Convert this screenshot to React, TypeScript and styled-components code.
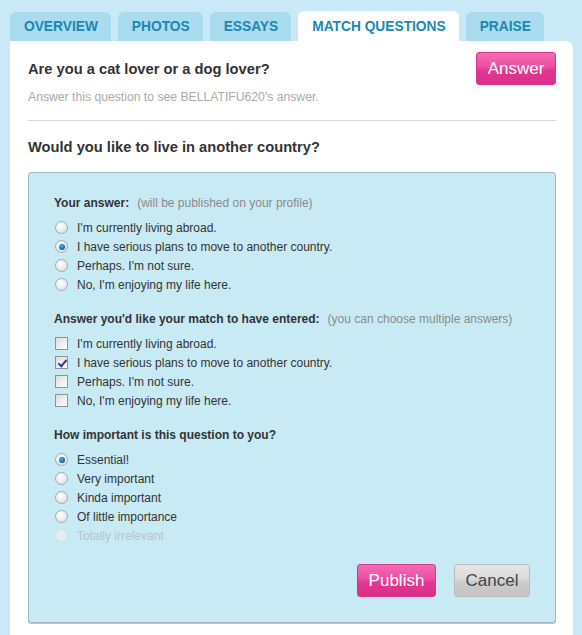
import React from "react";
import styled, { createGlobalStyle, css } from "styled-components";

const Global = createGlobalStyle`
  html, body { margin: 0; padding: 0; }
  body {
    background: #c8e9f5;
    font-family: "Liberation Sans", Arial, sans-serif;
    color: #333;
  }
`;

const Page = styled.div`
  width: 563px;
  padding: 11px 0 0 10px;
`;

const Tabs = styled.div`
  display: flex;
  align-items: flex-end;
  gap: 7px;
`;

const Tab = styled.div<{ $active?: boolean }>`
  height: ${(p) => (p.$active ? 30 : 29)}px;
  padding: 0 13px 0 14px;
  display: flex;
  align-items: center;
  border-radius: 6px 6px 0 0;
  font-size: 13.75px;
  font-weight: bold;
  color: #1c87b4;
  background: ${(p) => (p.$active ? "#ffffff" : "#a9dcee")};
`;

const Panel = styled.div`
  background: #fff;
  border-radius: 0 7px 0 0;
  padding: 11px 17px 24px 18px;
`;

const HeaderRow = styled.div`
  display: flex;
  align-items: center;
  justify-content: space-between;
`;

const Title = styled.h2`
  margin: 0;
  font-size: 14.7px;
  font-weight: bold;
  color: #333;
`;

const Hint = styled.div`
  margin-top: 4px;
  font-size: 12.2px;
  line-height: 16px;
  color: #aaa;
`;

const Divider = styled.hr`
  border: none;
  border-top: 1px solid #d6d6d6;
  margin: 15px 0 16px;
`;

const Question = styled(Title)`
  line-height: 20px;
  margin-bottom: 15px;
`;

const Box = styled.div`
  background: #c8eaf5;
  border: 1px solid #a7b8bf;
  border-radius: 3px;
  box-shadow: 0 1px 0 #b9c6cb;
  padding: 20px 25px 25px 25px;
`;

const Section = styled.div`
  & + & {
    margin-top: 15px;
  }
`;

const SectionHead = styled.div`
  height: 19px;
  display: flex;
  align-items: center;
  margin-bottom: 6px;
  font-size: 12px;
  font-weight: bold;
  color: #333;
`;

const Note = styled.span`
  font-weight: normal;
  color: #8a8a8a;
  margin-left: 8px;
`;

const Option = styled.label<{ $disabled?: boolean }>`
  height: 19px;
  display: flex;
  align-items: center;
  font-size: 12px;
  color: ${(p) => (p.$disabled ? "#b8c4c8" : "#333")};
`;

const Radio = styled.input.attrs({ type: "radio" })`
  appearance: none;
  width: 13px;
  height: 13px;
  margin: 0 9px 0 1px;
  border-radius: 50%;
  border: 1px solid #a3a9ac;
  background: radial-gradient(circle at 40% 35%, #ffffff 0%, #e9ebec 55%, #cfd3d5 100%);
  box-sizing: border-box;
  position: relative;
  &:checked::after {
    content: "";
    position: absolute;
    left: 2.5px;
    top: 2.5px;
    width: 6px;
    height: 6px;
    border-radius: 50%;
    background: radial-gradient(circle at 40% 35%, #4fb3ea 0%, #1669a6 60%, #0d3f6d 100%);
  }
  &:disabled {
    border-color: #d3dde0;
    background: #e4eef1;
  }
`;

const Check = styled.input.attrs({ type: "checkbox" })`
  appearance: none;
  width: 13px;
  height: 13px;
  margin: 0 9px 0 1px;
  border: 1px solid #8e9396;
  background: linear-gradient(135deg, #dcdcdc 0%, #f4f4f4 70%, #ffffff 100%);
  box-sizing: border-box;
  position: relative;
  &:checked::after {
    content: "";
    position: absolute;
    left: 3.5px;
    top: 0.5px;
    width: 3px;
    height: 7px;
    border: solid #2b3f8a;
    border-width: 0 2px 2px 0;
    transform: rotate(40deg);
  }
`;

const Actions = styled.div`
  display: flex;
  justify-content: flex-end;
  gap: 18px;
  margin-top: 19px;
`;

const Button = styled.button<{ $variant: "pink" | "gray"; $w: number }>`
  height: 33px;
  width: ${(p) => p.$w}px;
  border-radius: 3px;
  font-family: "Liberation Sans", Arial, sans-serif;
  font-size: 17px;
  padding: 0;
  cursor: pointer;
  ${(p) =>
    p.$variant === "pink"
      ? css`
          color: #fff;
          border: 1px solid #d4378b;
          background: linear-gradient(#f46bb5 0%, #ec4ea2 45%, #e23891 55%, #d92f88 100%);
        `
      : css`
          color: #444;
          border: 1px solid #b9b9b9;
          background: linear-gradient(#e6e6e6 0%, #dadada 45%, #cccccc 55%, #c3c3c3 100%);
        `}
`;

const tabs = ["OVERVIEW", "PHOTOS", "ESSAYS", "MATCH QUESTIONS", "PRAISE"];
const choices = [
  "I'm currently living abroad.",
  "I have serious plans to move to another country.",
  "Perhaps. I'm not sure.",
  "No, I'm enjoying my life here.",
];
const importance = [
  "Essential!",
  "Very important",
  "Kinda important",
  "Of little importance",
  "Totally irrelevant",
];

export default function App() {
  return (
    <Page>
      <Global />
      <Tabs>
        {tabs.map((t) => (
          <Tab key={t} $active={t === "MATCH QUESTIONS"}>
            {t}
          </Tab>
        ))}
      </Tabs>
      <Panel>
        <HeaderRow>
          <Title>Are you a cat lover or a dog lover?</Title>
          <Button $variant="pink" $w={80}>
            Answer
          </Button>
        </HeaderRow>
        <Hint>Answer this question to see BELLATIFU620's answer.</Hint>
        <Divider />
        <Question>Would you like to live in another country?</Question>
        <Box>
          <Section>
            <SectionHead>
              Your answer:<Note>(will be published on your profile)</Note>
            </SectionHead>
            {choices.map((c, i) => (
              <Option key={c}>
                <Radio name="mine" defaultChecked={i === 1} />
                {c}
              </Option>
            ))}
          </Section>
          <Section>
            <SectionHead>
              Answer you'd like your match to have entered:
              <Note>(you can choose multiple answers)</Note>
            </SectionHead>
            {choices.map((c, i) => (
              <Option key={c}>
                <Check defaultChecked={i === 1} />
                {c}
              </Option>
            ))}
          </Section>
          <Section>
            <SectionHead>How important is this question to you?</SectionHead>
            {importance.map((c, i) => (
              <Option key={c} $disabled={i === 4}>
                <Radio name="imp" defaultChecked={i === 0} disabled={i === 4} />
                {c}
              </Option>
            ))}
          </Section>
          <Actions>
            <Button $variant="pink" $w={79}>
              Publish
            </Button>
            <Button $variant="gray" $w={76}>
              Cancel
            </Button>
          </Actions>
        </Box>
      </Panel>
    </Page>
  );
}
